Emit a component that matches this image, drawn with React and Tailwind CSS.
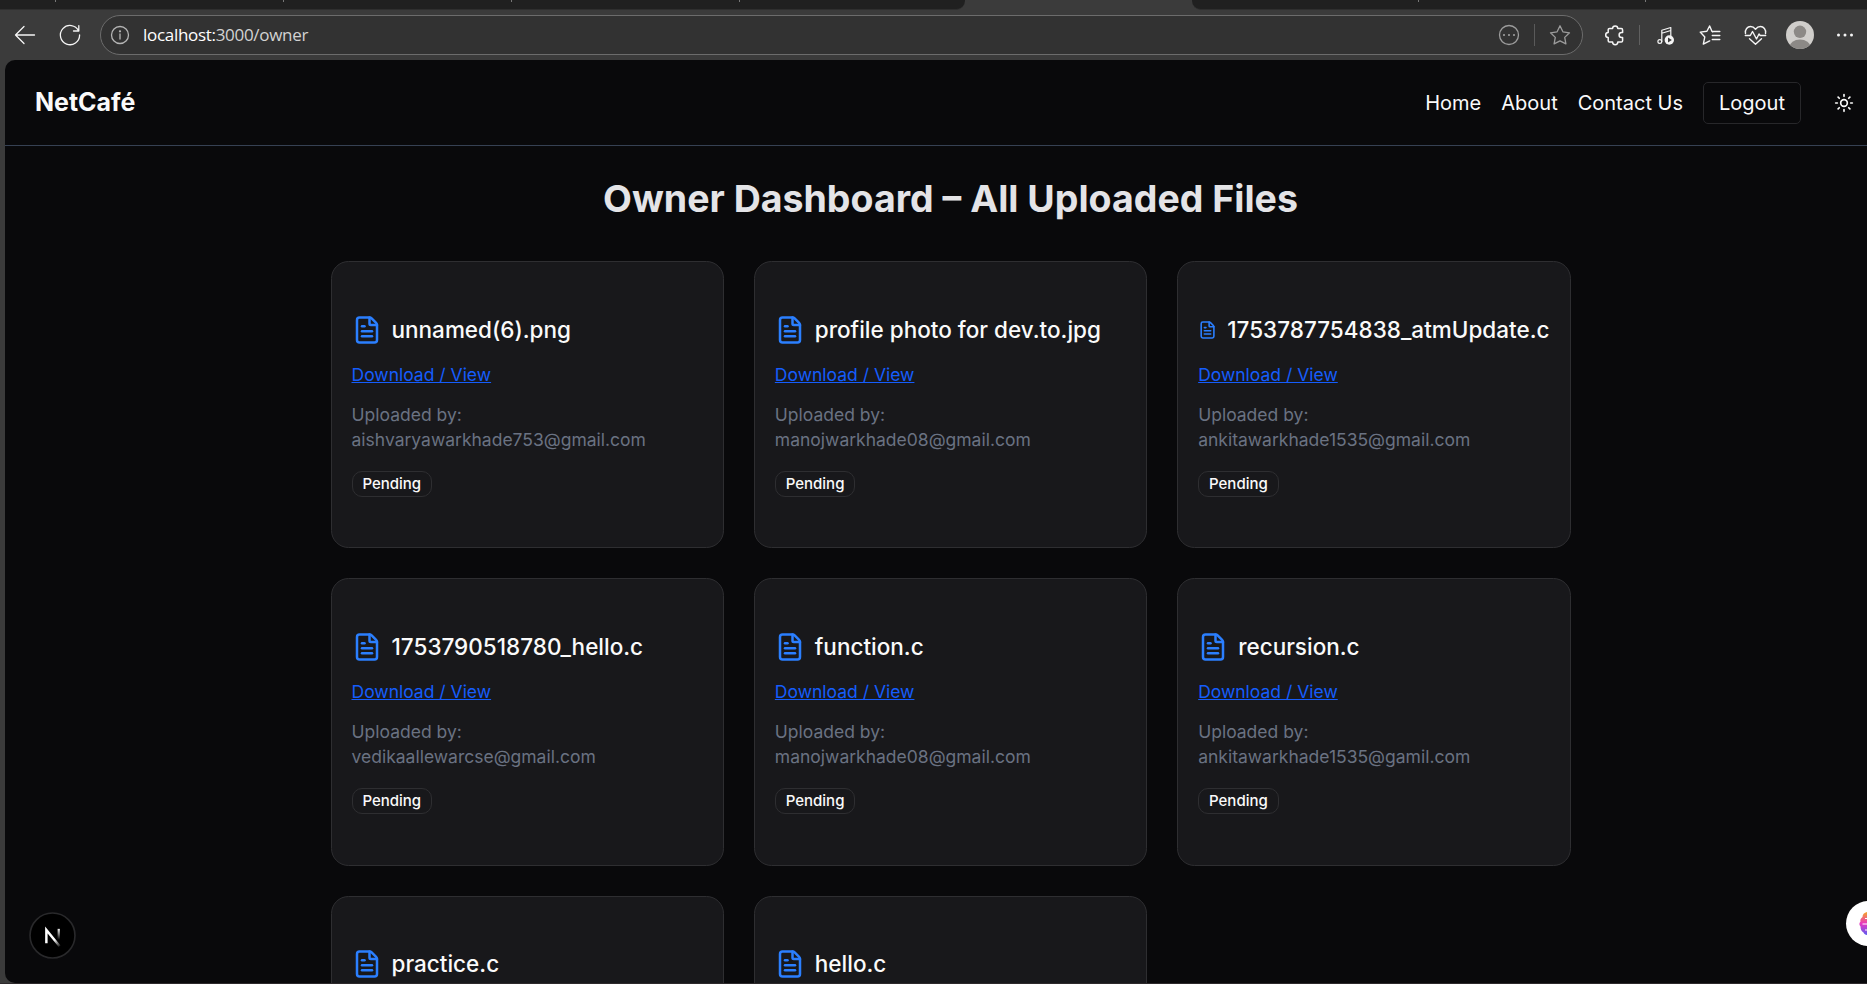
import React from "react";
import { FileText, Sun } from "lucide-react";

const files = [
  { name: "unnamed(6).png", email: "aishvaryawarkhade753@gmail.com" },
  { name: "profile photo for dev.to.jpg", email: "manojwarkhade08@gmail.com" },
  { name: "1753787754838_atmUpdate.c", email: "ankitawarkhade1535@gmail.com" },
  { name: "1753790518780_hello.c", email: "vedikaallewarcse@gmail.com" },
  { name: "function.c", email: "manojwarkhade08@gmail.com" },
  { name: "recursion.c", email: "ankitawarkhade1535@gamil.com" },
  { name: "practice.c" },
  { name: "hello.c" },
];

function Icon({ children, className = "", width = 1.3 }) {
  return (
    <svg
      viewBox="0 0 24 24"
      className={`size-6 shrink-0 ${className}`}
      fill="none"
      stroke="currentColor"
      strokeWidth={width}
      strokeLinecap="round"
      strokeLinejoin="round"
    >
      {children}
    </svg>
  );
}

function Tick() {
  return <div className="h-0.5 w-px bg-[#777]" />;
}

function TabStrip() {
  return (
    <div className="flex h-2.5 shrink-0 bg-[#3b3b3b]">
      <div className="flex w-[965px] gap-[227px] rounded-br-[9px] border-b border-[#2f2f2f] bg-[#202020] pl-[55px]">
        <Tick />
        <Tick />
        <Tick />
        <Tick />
      </div>
      <div className="w-[227px]" />
      <div className="flex flex-1 gap-[226px] rounded-bl-[9px] border-b border-[#2f2f2f] bg-[#202020] pl-[226px]">
        <Tick />
        <Tick />
      </div>
    </div>
  );
}

function Toolbar() {
  return (
    <div className="flex h-[50px] shrink-0 items-center bg-[#3b3b3b] pl-[13px] pr-2.5 text-[#f5f5f5]">
      <Icon>
        <path d="M21.5 12H2.5M11 3.5L2.5 12l8.500 8.500" />
      </Icon>
      <Icon className="ml-[21px]">
        <path d="M20.600 7.800A9.600 9.600 0 1 0 21.600 12M20.800 2.700v5.300h-5.300" />
      </Icon>
      <div className="ml-[18px] flex h-10 w-[1483px] items-center rounded-full border border-[#6c6c6c] bg-[#323232] pl-[7px] pr-2.5 text-[#9c9c9c]">
        <Icon className="text-[#b5b5b5]">
          <circle cx="12" cy="12" r="8.500" />
          <path d="M12 11v5" />
          <circle cx="12" cy="8.300" r="0.500" fill="currentColor" />
        </Icon>
        <div className="ml-[11px] flex-1 font-['Open_Sans','Noto_Sans',sans-serif] text-[17px] tracking-[-0.300px] text-white">
          localhost:<span className="text-[#d2d2d2]">3000/owner</span>
        </div>
        <Icon>
          <circle cx="12" cy="12" r="9.500" />
          <path d="M7 12h0M12 12h0M17 12h0" strokeWidth="2.200" />
        </Icon>
        <div className="ml-[13px] h-[22px] w-px bg-[#5a5a5a]" />
        <Icon className="ml-[13px]">
          <path d="M12 2.800l2.900 6 6.600 1-4.800 4.600 1.200 6.500-5.900-3.100-5.900 3.100 1.200-6.500-4.800-4.600 6.600-1z" />
        </Icon>
      </div>
      <Icon className="ml-[19px]" width={1.5}>
        <path d="M6.200 6.800q0-1.300 1.300-1.300h3.100a2.600 2.600 0 0 1 5.200 0h3.400q1.400 0 1.400 1.400v2.700h-1a2.500 2.500 0 0 0 0 5h1v3.100q0 1.400-1.400 1.400h-3.400a2.600 2.600 0 0 1-5.200 0H7.500q-1.300 0-1.300-1.300v-3.200a2.500 2.500 0 0 1 0-5z" />
      </Icon>
      <div className="ml-[13px] h-5 w-px bg-[#606060]" />
      <Icon className="ml-3.5" width={1.2}>
        <circle cx="5.800" cy="18.500" r="1.900" />
        <path d="M7.800 18.500V7.300l9-2.800v8M7.800 10.300l9-2.800" />
        <circle cx="15.300" cy="17" r="4.700" fill="currentColor" stroke="none" />
        <path d="M14 14.600v4.800l3.900-2.400z" fill="#3b3b3b" stroke="none" />
      </Icon>
      <Icon className="ml-5" width={1.4}>
        <path d="M14.800 8.900L14 8.400 11.700 2.900 8.900 8.300 2.200 9.100l4.600 4.800-1.500 7.200 6.400-3.200M14.300 8.500h7.500M14.300 12.500h7.500M14.300 16.500h7.500" />
      </Icon>
      <Icon className="ml-[21px]" width={1.4}>
        <path d="M2.500 10.500C1.700 6.500 4.500 3.500 7.500 3.500c2.200 0 3.900 1.300 5 2.700 1.100-1.400 2.800-2.700 5-2.700 3 0 5.800 3 5 7M2.300 12.500h5l2.200-4 4 7.500 2.500-5 1.200 1.500h5.500M6.500 15.700L12.500 21.200l6-5.500" />
      </Icon>
      <svg viewBox="0 0 28 28" className="ml-[19px] size-7 shrink-0">
        <clipPath id="avatar">
          <circle cx="14" cy="14" r="14" />
        </clipPath>
        <g clipPath="url(#avatar)">
          <rect width="28" height="28" fill="#d0cecb" />
          <circle cx="14" cy="10.800" r="6.200" fill="#8c8986" />
          <ellipse cx="14" cy="26" rx="10.500" ry="7.500" fill="#8c8986" />
        </g>
      </svg>
      <Icon className="ml-[19px]">
        <path d="M5.500 12h0M12 12h0M18.500 12h0" strokeWidth="3" />
      </Icon>
    </div>
  );
}

function Header() {
  return (
    <header className="flex h-[86px] items-center border-b border-[#364153] pl-[30px] pr-[13px] text-xl text-neutral-50">
      <div className="flex-1 text-[25px] font-bold">NetCafé</div>
      <nav className="flex items-center gap-5">
        <a>Home</a>
        <a>About</a>
        <a>Contact Us</a>
        <button className="h-[42px] w-[98px] rounded-[5px] border border-[#27272a]">Logout</button>
      </nav>
      <Sun className="ml-[33px] size-5" />
    </header>
  );
}

function FileCard({ name, email }) {
  return (
    <article className="h-[287.400px] rounded-[17.500px] border border-[#2e2e31] bg-[#18181b] px-5 pt-[50px]">
      <div className="flex h-[35px] items-center gap-2.5">
        <FileText className="h-[30px] w-[30px] min-w-0 text-[#2b7fff]" />
        <h2 className="whitespace-nowrap text-[22.500px] font-medium text-neutral-50">{name}</h2>
      </div>
      {email && (
        <>
          <a className="mt-[15px] block text-[17.500px] leading-[25px] text-[#155dfc] underline">Download / View</a>
          <p className="mt-[15px] text-[17.500px] leading-[25px] text-[#6a7282]">
            Uploaded by:
            <br />
            {email}
          </p>
          <span className="mt-[19px] flex h-[26px] w-[80.500px] items-center justify-center rounded-[10px] border border-[#2e2e31] text-[15px] font-medium text-neutral-50">
            Pending
          </span>
        </>
      )}
    </article>
  );
}

export default function App() {
  return (
    <div className="relative flex h-[984px] w-[1867px] flex-col overflow-hidden bg-[#3b3b3b] font-['Inter',sans-serif]">
      <TabStrip />
      <Toolbar />
      <div className="ml-[5px] h-[923px] shrink-0 overflow-hidden rounded-l-[10px] bg-[#09090b]">
        <Header />
        <main className="w-[1891px] pt-[30px]">
          <h1 className="text-center text-[37.500px] font-bold leading-[45px] text-[#e4e4e7]">
            Owner Dashboard – All Uploaded Files
          </h1>
          <div className="mx-auto mt-10 grid w-[1240px] grid-cols-3 gap-[30px]">
            {files.map((f) => (
              <FileCard key={f.name} {...f} />
            ))}
          </div>
        </main>
      </div>
      <div className="h-px bg-[#2d292b]" />

      <svg viewBox="0 0 46 46" className="absolute left-[29px] top-[912px] size-[47px]">
        <defs>
          <linearGradient id="stem" x1="0" y1="16" x2="0" y2="27" gradientUnits="userSpaceOnUse">
            <stop offset="0" stopColor="#fff" />
            <stop offset="1" stopColor="#fff" stopOpacity="0" />
          </linearGradient>
          <linearGradient id="slash" x1="25" y1="27" x2="31" y2="34" gradientUnits="userSpaceOnUse">
            <stop offset="0" stopColor="#fff" />
            <stop offset="1" stopColor="#fff" stopOpacity="0" />
          </linearGradient>
        </defs>
        <circle cx="23" cy="23" r="22" fill="#000" stroke="#29292b" strokeWidth="1.600" />
        <path d="M17 30.500V17.500L30 33.500" fill="none" stroke="url(#slash)" strokeWidth="2.400" />
        <rect x="28" y="16.500" width="2.200" height="12" fill="url(#stem)" />
      </svg>

      <svg viewBox="0 0 22 46" className="absolute right-0 top-[900px] h-[46px] w-[22px]">
        <defs>
          <linearGradient id="brain" x1="0" y1="0" x2="0" y2="1">
            <stop offset="0" stopColor="#f5a524" />
            <stop offset="0.500" stopColor="#e935c1" />
            <stop offset="1" stopColor="#5b5bf0" />
          </linearGradient>
        </defs>
        <circle cx="23.500" cy="23.500" r="22.500" fill="#fff" />
        <path
          d="M22 12c-3 .5-4.500 2.500-4.500 5-2 1.500-2.500 3-2 4.500-1.500 1.500-1.500 3.500 0 5 0 3 1 5 3 6 .5 1.500 2 2.500 3.500 2.500z"
          fill="url(#brain)"
        />
        <path d="M22 18.500h-2M22 24h-4.500M22 30h-2" stroke="#fff" strokeWidth="1" />
      </svg>
    </div>
  );
}
